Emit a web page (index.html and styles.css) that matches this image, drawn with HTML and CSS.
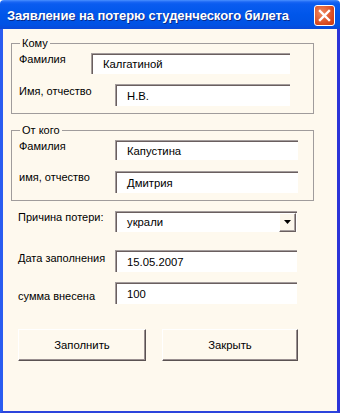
FILE: index.html
```html
<!DOCTYPE html>
<html lang="ru">
<head>
<meta charset="utf-8">
<title>Заявление на потерю студенческого билета</title>
<link rel="stylesheet" href="styles.css">
</head>
<body>
<div class="window">
  <div class="titlebar">
    <span class="title">Заявление на потерю студенческого билета</span>
    <span class="close">
      <svg width="21" height="21" viewBox="0 0 21 21"><path d="M6 6 L15 15 M15 6 L6 15" stroke="#fff" stroke-width="2.4" stroke-linecap="square"/></svg>
    </span>
  </div>
  <div class="client">
    <fieldset class="frame">
      <legend>Кому</legend>
      <div class="row a1"><span class="lbl">Фамилия</span><div class="box">Калгатиной</div></div>
      <div class="row a2"><span class="lbl">Имя, отчество</span><div class="box">Н.В.</div></div>
    </fieldset>
    <fieldset class="frame second">
      <legend>От кого</legend>
      <div class="row b1"><span class="lbl">Фамилия</span><div class="box">Капустина</div></div>
      <div class="row b2"><span class="lbl">имя, отчество</span><div class="box">Дмитрия</div></div>
    </fieldset>
    <div class="row c1"><span class="lbl">Причина потери:</span><div class="box combo"><span class="val">украли</span><span class="drop"><svg width="7" height="4" viewBox="0 0 7 4"><path d="M0 0 H7 L3.5 4 Z" fill="#000"/></svg></span></div></div>
    <div class="row c2"><span class="lbl">Дата заполнения</span><div class="box">15.05.2007</div></div>
    <div class="row c3"><span class="lbl">сумма внесена</span><div class="box">100</div></div>
    <div class="buttons">
      <div class="btn fill">Заполнить</div>
      <div class="btn shut">Закрыть</div>
    </div>
  </div>
</div>
</body>
</html>
```
FILE: styles.css
```css
html, body { margin: 0; padding: 0; }
body { width: 340px; height: 413px; overflow: hidden; font-family: "Liberation Sans", Arial, sans-serif; }
.window { width: 340px; height: 413px; display: flex; flex-direction: column; }
.titlebar {
  height: 29px; flex: none; display: flex; align-items: center; justify-content: space-between;
  padding: 0 5px 0 7px; box-sizing: border-box;
  background: linear-gradient(#4a90ff 0, #1a66f4 2px, #0a5cf0 4px, #0056ea 50%, #0052e4 85%, #0a48d8 100%);
  border-radius: 4px 4px 0 0;
}
.title { color: #fff; font-size: 13px; font-weight: bold; letter-spacing: -0.08px; text-shadow: 1px 1px 0 #0a2a8a; padding-top: 1px; }
.close {
  width: 19px; height: 19px; border: 1px solid #fff; border-radius: 3px;
  background: radial-gradient(circle at 35% 35%, #f08a60, #d8461c 70%, #c43a14);
  display: flex; margin-top: 1px;
}
.close svg { margin: -1px; }
.client {
  flex: 1; background: #fef9ee;
  border-left: 3px solid #2a5cf0; border-right: 3px solid #2c34d8; border-bottom: 2px solid #2c44dc;
  padding: 8px 0 0 8px; font-size: 11px; color: #000;
}
.frame { margin: 0; padding: 0 0 7px 0; width: 303px; box-sizing: border-box; border: 1px solid #a09c9c; }
.frame legend { margin-left: 8px; padding: 0 2px; line-height: 13px; }
.frame.second { margin-top: 10px; }
.row { display: flex; align-items: flex-start; padding-left: 7px; }
.lbl { line-height: 13px; white-space: nowrap; }
.box {
  background: #fff; box-sizing: border-box; display: flex; align-items: center;
  border-top: 1px solid #a39c9c; border-left: 1px solid #a39c9c;
  box-shadow: inset 1px 1px 0 #6a5f5f;
  padding-left: 11px; font-size: 11.3px; white-space: nowrap;
}
.a1 { margin-top: 3px; }
.a1 .lbl { width: 72px; }
.a1 .box { width: 199px; height: 21px; }
.a2 { margin-top: 10px; }
.a2 .lbl { width: 96px; padding-top: 1px; }
.a2 .box { width: 175px; height: 22px; }
.b1 { margin-top: 3px; }
.b1 .lbl { width: 96px; }
.b1 .box { width: 183px; height: 20px; }
.b2 { margin-top: 11px; }
.b2 .lbl { width: 96px; }
.b2 .box { width: 183px; height: 22px; }
.client > .row { padding-left: 7px; }
.c1 { margin-top: 10px; }
.c1 .lbl, .c2 .lbl, .c3 .lbl { width: 97px; }
.c1 .box { width: 182px; height: 21px; padding-right: 1px; }
.combo .val { flex: 1; }
.drop {
  width: 17px; height: 19px; box-sizing: border-box; display: flex; align-items: center; justify-content: center;
  background: #fcf7ec; border-top: 1px solid #fff; border-left: 1px solid #fff;
  border-right: 1px solid #6a6060; border-bottom: 1px solid #6a6060;
  box-shadow: inset -1px -1px 0 #a8a0a0; margin-top: 0;
}
.c2 { margin-top: 18px; }
.c2 .lbl { padding-top: 2px; }
.c2 .box { width: 182px; height: 22px; }
.c3 { margin-top: 10px; }
.c3 .lbl { padding-top: 8px; }
.c3 .box { width: 182px; height: 22px; }
.buttons { display: flex; gap: 16px; margin: 25px 0 0 7px; }
.btn {
  height: 32px; box-sizing: border-box; display: flex; align-items: center; justify-content: center;
  border-top: 1px solid #fff; border-left: 1px solid #fff;
  border-right: 1px solid #5a5252; border-bottom: 1px solid #5a5252;
  box-shadow: inset -1px -1px 0 #9a9090; background: #fef9ee; font-size: 11.3px;
}
.fill { width: 128px; }
.shut { width: 136px; }
```
